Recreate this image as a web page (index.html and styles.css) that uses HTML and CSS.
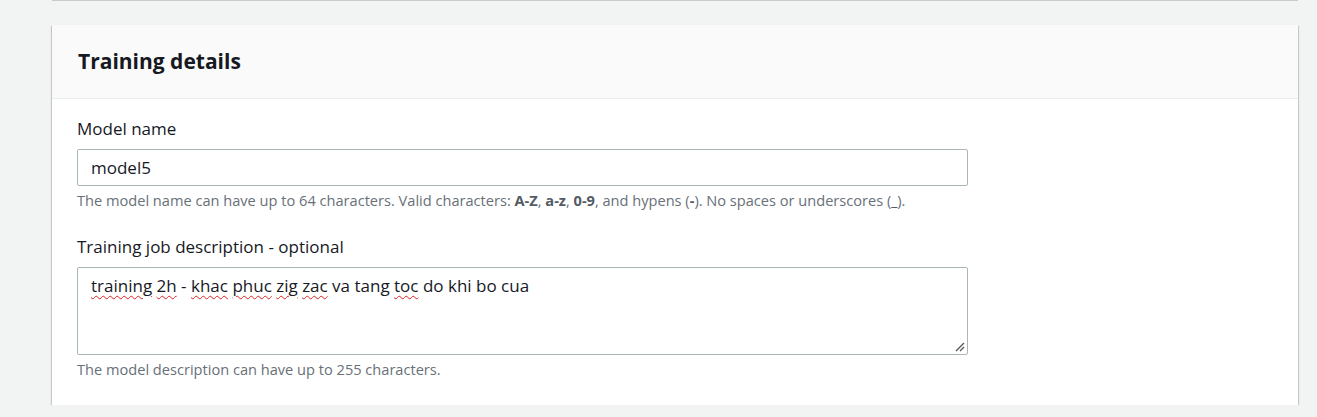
FILE: index.html
```html
<!DOCTYPE html>
<html>
<head>
<meta charset="utf-8">
<link rel="stylesheet" href="styles.css">
</head>
<body>
<div class="page">
  <div class="prev-card"></div>
  <section class="card">
    <header class="card-header">
      <h2 class="card-title">Training details</h2>
    </header>
    <div class="card-body">
      <div class="field">
        <label class="field-label">Model name</label>
        <div class="input">model5</div>
        <p class="field-hint">The model name can have up to 64 characters. Valid characters: <b>A-Z</b>, <b>a-z</b>, <b>0-9</b>, and hypens (<b>-</b>). No spaces or underscores (<b>_</b>).</p>
      </div>
      <div class="field">
        <label class="field-label">Training job description - optional</label>
        <div class="textarea"><span class="sp">training</span> <span class="sp">2h</span> - <span class="sp">khac</span> <span class="sp">phuc</span> <span class="sp">zig</span> <span class="sp">zac</span> va tang <span class="sp">toc</span> do khi bo cua<svg class="grip" width="10" height="10" viewBox="0 0 10 10"><path d="M9 1 L1 9 M9 5 L5 9" stroke="#555" stroke-width="1.3" fill="none"/></svg></div>
        <p class="field-hint">The model description can have up to 255 characters.</p>
      </div>
    </div>
  </section>
</div>
</body>
</html>
```
FILE: styles.css
```css
html, body {
  margin: 0;
  padding: 0;
  background: #f2f3f3;
  font-family: "Open Sans", "Noto Sans", sans-serif;
  color: #16191f;
}
.page {
  padding: 0 19px 0 52px;
}
.prev-card {
  height: 1px;
  background: #c6cccc;
}
.card {
  margin-top: 24px;
  background: #fff;
  box-shadow: 0 1px 1px 0 rgba(0,28,36,.3), 1px 1px 1px 0 rgba(0,28,36,.15), -1px 1px 1px 0 rgba(0,28,36,.15);
}
.card-header {
  background: #fafafa;
  border-bottom: 1px solid #eaeded;
  height: 74px;
  box-sizing: border-box;
  display: flex;
  align-items: center;
  padding: 0 26px;
}
.card-title {
  margin: 0;
  font-size: 21px;
  font-weight: 700;
  line-height: 26px;
  padding-bottom: 1px;
}
.card-body {
  padding: 20px 25px 26px;
  display: flex;
  flex-direction: column;
  gap: 27px;
}
.field {
  display: flex;
  flex-direction: column;
}
.field-label {
  font-size: 17px;
  line-height: 20px;
  margin-bottom: 10px;
}
.input, .textarea {
  width: 891px;
  box-sizing: border-box;
  border: 1px solid #aab7b8;
  border-radius: 2px;
  background: #fff;
  font-size: 17px;
  padding: 0 13px;
}
.input {
  height: 37px;
  line-height: 35px;
}
.textarea {
  position: relative;
  height: 88px;
  line-height: 22px;
  padding-top: 7px;
}
.sp {
  text-decoration: underline wavy #e02020;
  text-decoration-thickness: 1px;
  text-underline-offset: 3px;
}
.grip {
  position: absolute;
  right: 2px;
  bottom: 2px;
}
.field-hint {
  margin: 5px 0 0;
  font-size: 14.6px;
  line-height: 19px;
  color: #687078;
}
.field-hint b {
  color: #545b64;
}
```
